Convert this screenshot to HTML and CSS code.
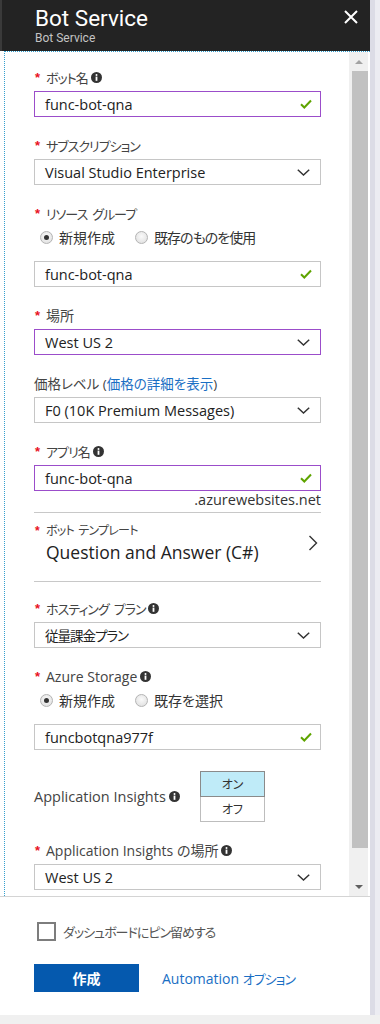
FILE: index.html
```html
<!DOCTYPE html>
<html lang="ja">
<head>
<meta charset="utf-8">
<title>Bot Service</title>
<link rel="stylesheet" href="styles.css">
</head>
<body>
<div class="screen">
  <div class="blade">
    <header class="hdr">
      <div class="titles">
        <div class="title">Bot Service</div>
        <div class="subtitle">Bot Service</div>
      </div>
      <svg class="close" width="14" height="14" viewBox="0 0 14 14"><path d="M1 1L13 13M13 1L1 13" stroke="#fff" stroke-width="2"/></svg>
    </header>

    <div class="content">
      <div class="form">
        <div class="field">
          <div class="label"><span class="req">*</span><span class="kana">ボット名</span><svg class="info" viewBox="0 0 11 11"><circle cx="5.5" cy="5.5" r="5.5" fill="#333"/><rect x="4.6" y="4.6" width="1.8" height="4.2" fill="#fff"/><circle cx="5.5" cy="2.9" r="1" fill="#fff"/></svg></div>
          <div class="control focus"><span>func-bot-qna</span><svg class="check" viewBox="0 0 12 10"><path d="M1 5.2L4.3 8.5L11 1.5" fill="none" stroke="#5ea400" stroke-width="2"/></svg></div>
        </div>

        <div class="field">
          <div class="label"><span class="req">*</span><span class="kana">サブスクリプション</span></div>
          <div class="control"><span>Visual Studio Enterprise</span><svg class="chev" viewBox="0 0 13 7"><path d="M0.8 0.8L6.5 6L12.2 0.8" fill="none" stroke="#333" stroke-width="1.5"/></svg></div>
        </div>

        <div class="field">
          <div class="label"><span class="req">*</span><span class="kana">リソース</span><span class="kana gap">グループ</span></div>
          <div class="radios">
            <div class="opt"><span class="radio on"></span><span>新規作成</span></div>
            <div class="opt"><span class="radio"></span><span class="tight">既存のものを使用</span></div>
          </div>
          <div class="control after-radios"><span>func-bot-qna</span><svg class="check" viewBox="0 0 12 10"><path d="M1 5.2L4.3 8.5L11 1.5" fill="none" stroke="#5ea400" stroke-width="2"/></svg></div>
        </div>

        <div class="field">
          <div class="label"><span class="req">*</span><span>場所</span></div>
          <div class="control focus"><span>West US 2</span><svg class="chev" viewBox="0 0 13 7"><path d="M0.8 0.8L6.5 6L12.2 0.8" fill="none" stroke="#333" stroke-width="1.5"/></svg></div>
        </div>

        <div class="field">
          <div class="label plain"><span>価格レベル (<span class="link">価格の詳細を表示</span>)</span></div>
          <div class="control"><span>F0 (10K Premium Messages)</span><svg class="chev" viewBox="0 0 13 7"><path d="M0.8 0.8L6.5 6L12.2 0.8" fill="none" stroke="#333" stroke-width="1.5"/></svg></div>
        </div>

        <div class="field">
          <div class="label"><span class="req">*</span><span class="kana">アプリ名</span><svg class="info" viewBox="0 0 11 11"><circle cx="5.5" cy="5.5" r="5.5" fill="#333"/><rect x="4.6" y="4.6" width="1.8" height="4.2" fill="#fff"/><circle cx="5.5" cy="2.9" r="1" fill="#fff"/></svg></div>
          <div class="control focus"><span>func-bot-qna</span><svg class="check" viewBox="0 0 12 10"><path d="M1 5.2L4.3 8.5L11 1.5" fill="none" stroke="#5ea400" stroke-width="2"/></svg></div>
          <div class="suffix">.azurewebsites.net</div>
        </div>

        <div class="template">
          <div class="tpl-text">
            <div class="tpl-label"><span class="req">*</span><span>ボット</span><span class="gap">テンプレート</span></div>
            <div class="tpl-value">Question and Answer (C#)</div>
          </div>
          <svg class="chev-right" viewBox="0 0 10 16"><path d="M1.5 1L8.5 8L1.5 15" fill="none" stroke="#333" stroke-width="1.4"/></svg>
        </div>

        <div class="field hosting">
          <div class="label"><span class="req">*</span><span class="kana">ホスティング</span><span class="kana gap">プラン</span><svg class="info" viewBox="0 0 11 11"><circle cx="5.5" cy="5.5" r="5.5" fill="#333"/><rect x="4.6" y="4.6" width="1.8" height="4.2" fill="#fff"/><circle cx="5.5" cy="2.9" r="1" fill="#fff"/></svg></div>
          <div class="control"><span class="kana">従量課金プラン</span><svg class="chev" viewBox="0 0 13 7"><path d="M0.8 0.8L6.5 6L12.2 0.8" fill="none" stroke="#333" stroke-width="1.5"/></svg></div>
        </div>

        <div class="field">
          <div class="label"><span class="req">*</span><span>Azure Storage</span><svg class="info" viewBox="0 0 11 11"><circle cx="5.5" cy="5.5" r="5.5" fill="#333"/><rect x="4.6" y="4.6" width="1.8" height="4.2" fill="#fff"/><circle cx="5.5" cy="2.9" r="1" fill="#fff"/></svg></div>
          <div class="radios">
            <div class="opt"><span class="radio on"></span><span>新規作成</span></div>
            <div class="opt"><span class="radio"></span><span>既存を選択</span></div>
          </div>
          <div class="control after-radios"><span>funcbotqna977f</span><svg class="check" viewBox="0 0 12 10"><path d="M1 5.2L4.3 8.5L11 1.5" fill="none" stroke="#5ea400" stroke-width="2"/></svg></div>
        </div>

        <div class="insights">
          <div class="ins-label"><span>Application Insights</span><svg class="info" viewBox="0 0 11 11"><circle cx="5.5" cy="5.5" r="5.5" fill="#333"/><rect x="4.6" y="4.6" width="1.8" height="4.2" fill="#fff"/><circle cx="5.5" cy="2.9" r="1" fill="#fff"/></svg></div>
          <div class="toggle">
            <div class="tg on">オン</div>
            <div class="tg">オフ</div>
          </div>
        </div>

        <div class="field">
          <div class="label"><span class="req">*</span><span>Application Insights の場所</span><svg class="info" viewBox="0 0 11 11"><circle cx="5.5" cy="5.5" r="5.5" fill="#333"/><rect x="4.6" y="4.6" width="1.8" height="4.2" fill="#fff"/><circle cx="5.5" cy="2.9" r="1" fill="#fff"/></svg></div>
          <div class="control"><span>West US 2</span><svg class="chev" viewBox="0 0 13 7"><path d="M0.8 0.8L6.5 6L12.2 0.8" fill="none" stroke="#333" stroke-width="1.5"/></svg></div>
        </div>
      </div>

      <div class="scrollbar">
        <div class="sb-btn"><span class="tri-up"></span></div>
        <div class="sb-thumb"></div>
        <div class="sb-space"></div>
        <div class="sb-btn"><span class="tri-down"></span></div>
      </div>
    </div>

    <footer class="foot">
      <div class="pin"><span class="cbox"></span><span class="kana">ダッシュボードにピン留めする</span></div>
      <div class="actions">
        <button class="create">作成</button>
        <span class="auto">Automation <span class="kana">オプション</span></span>
      </div>
    </footer>
  </div>
  <div class="edge"></div>
</div>
</body>
</html>
```

FILE: styles.css
```css
html, body {
  margin: 0;
  padding: 0;
}
body {
  background: #f0f0f0;
  font-family: "Open Sans", "Noto Sans CJK JP", sans-serif;
  font-feature-settings: "palt";
  color: #333;
}
.screen {
  display: flex;
  width: 380px;
  height: 1024px;
  background: #f0f0f0;
}
.blade {
  width: 370px;
  height: 1015px;
  background: #fff;
  display: flex;
  flex-direction: column;
}
.edge {
  width: 10px;
  height: 1015px;
  background: linear-gradient(to right, #dcdce6 0, #dcdce6 5px, #ececf2 5px);
}

/* header */
.hdr {
  height: 51px;
  flex: none;
  background: #232323;
  border-left: 2px solid #3a3a3a;
  box-sizing: border-box;
  display: flex;
  justify-content: space-between;
  align-items: flex-start;
  padding: 0 12px 0 33px;
  font-family: Roboto, "Open Sans", sans-serif;
}
.title {
  font-size: 22.5px;
  line-height: 26px;
  margin-top: 5px;
  color: #fff;
}
.subtitle {
  font-size: 12px;
  line-height: 14px;
  color: #c4c4c4;
}
.close {
  margin-top: 10px;
  width: 14px;
  height: 14px;
}

/* content */
.content {
  height: 845px;
  flex: none;
  box-sizing: border-box;
  margin-left: 4px;
  border-top: 1px dotted #35a0cf;
  border-left: 1px dotted #35a0cf;
  display: flex;
  overflow: hidden;
}
.form {
  width: 287px;
  flex: none;
  padding: 15px 0 0 29px;
}
.field {
  margin-top: 18px;
}
.field:first-child {
  margin-top: 0;
}
.field.hosting {
  margin-top: 16px;
}
.label {
  height: 20px;
  display: flex;
  align-items: center;
  font-size: 14px;
  color: #444;
  white-space: nowrap;
}
.label.plain {
  font-size: 13.5px;
}
.kana {
  font-size: 13px;
  letter-spacing: -1px;
}
.gap {
  margin-left: 5px;
}
.tight {
  letter-spacing: -1px;
}
.req {
  color: #e81123;
  width: 12px;
  flex: none;
  font-weight: bold;
  font-size: 13px;
  letter-spacing: 0;
  font-family: "Liberation Sans", sans-serif;
  padding-left: 1px;
  box-sizing: border-box;
}
.info {
  width: 11px;
  height: 11px;
  margin-left: 3px;
  flex: none;
}
.link {
  color: #1a6fc4;
}
.control {
  margin-top: 4px;
  height: 26px;
  box-sizing: border-box;
  border: 1px solid #c6c6c6;
  display: flex;
  align-items: center;
  justify-content: space-between;
  padding: 0 9px 0 10px;
  font-size: 14.5px;
  color: #222;
  white-space: nowrap;
}
.control .kana {
  font-size: 13.5px;
}
.control.focus {
  border-color: #9b4dca;
}
.control.after-radios {
  margin-top: 14px;
}
.check {
  width: 12px;
  height: 10px;
  margin-right: -1px;
}
.chev {
  width: 13px;
  height: 7px;
  margin-right: 1px;
}
.radios {
  margin-top: 4px;
  height: 20px;
  display: flex;
  align-items: center;
  padding-left: 6px;
  font-size: 14px;
  color: #333;
}
.opt {
  display: flex;
  align-items: center;
  gap: 6px;
}
.opt + .opt {
  margin-left: 20px;
}
.radio {
  width: 13px;
  height: 13px;
  box-sizing: border-box;
  border-radius: 50%;
  border: 1px solid #b4b4b4;
  background: radial-gradient(circle at 50% 40%, #fafafa, #dcdcdc);
  display: flex;
  align-items: center;
  justify-content: center;
}
.radio.on::after {
  content: "";
  width: 5px;
  height: 5px;
  border-radius: 50%;
  background: #333;
}
.suffix {
  text-align: right;
  font-size: 14.5px;
  line-height: 18px;
  color: #333;
}
.template {
  margin-top: 3px;
  border-top: 1px solid #c8c8c8;
  border-bottom: 1px solid #c8c8c8;
  padding: 10px 0 17px;
  display: flex;
  align-items: flex-start;
  justify-content: space-between;
}
.tpl-label {
  display: flex;
  font-size: 12px;
  line-height: 16px;
  color: #444;
  letter-spacing: -0.7px;
}
.tpl-label .req {
  font-size: 12px;
}
.tpl-label .gap {
  margin-left: 4px;
}
.tpl-value {
  margin-top: 1px;
  padding-left: 12px;
  font-size: 17.5px;
  line-height: 24px;
  color: #222;
}
.chev-right {
  width: 10px;
  height: 16px;
  margin-top: 12px;
  margin-right: 3px;
}
.insights {
  margin-top: 21px;
  display: grid;
  grid-template-columns: 166px 65px;
  align-items: center;
}
.ins-label {
  display: flex;
  align-items: center;
  font-size: 14.5px;
  color: #444;
  white-space: nowrap;
}
.toggle {
  display: flex;
  flex-direction: column;
  width: 65px;
}
.tg {
  height: 25px;
  box-sizing: border-box;
  border: 1px solid #bdbdbd;
  border-top: none;
  display: flex;
  align-items: center;
  justify-content: center;
  font-size: 12px;
  color: #333;
}
.tg.on {
  height: 26px;
  border: 1px solid #8a8a8a;
  background: #bfebf8;
}

/* scrollbar */
.scrollbar {
  margin-left: 28px;
  width: 19px;
  flex: none;
  background: #f0f0f0;
  display: flex;
  flex-direction: column;
}
.sb-btn {
  height: 19px;
  display: flex;
  align-items: center;
  justify-content: center;
}
.sb-thumb {
  height: 777px;
  margin-left: 3px;
  background: #c1c1c1;
}
.sb-space {
  flex: 1;
}
.tri-up {
  width: 0;
  height: 0;
  border-left: 4px solid transparent;
  border-right: 4px solid transparent;
  border-bottom: 4px solid #a3a3a3;
}
.tri-down {
  width: 0;
  height: 0;
  border-left: 4px solid transparent;
  border-right: 4px solid transparent;
  border-top: 4px solid #606060;
}

/* footer */
.foot {
  flex: 1;
  border-top: 1px solid #d4d4d4;
  padding: 25px 0 0 34px;
}
.pin {
  display: flex;
  align-items: center;
  gap: 7px;
  font-size: 13.5px;
  color: #555;
}
.cbox {
  margin-left: 3px;
  width: 19px;
  height: 19px;
  box-sizing: border-box;
  border: 2px solid #7d7d7d;
  background: #fff;
}
.actions {
  margin-top: 23px;
  display: flex;
  align-items: center;
}
.create {
  width: 105px;
  height: 28px;
  border: none;
  background: #0559ae;
  color: #fff;
  font-family: inherit;
  font-size: 14px;
  font-weight: bold;
  padding: 0;
}
.auto {
  margin-left: 23px;
  font-size: 14px;
  color: #1a6fc4;
}
```
